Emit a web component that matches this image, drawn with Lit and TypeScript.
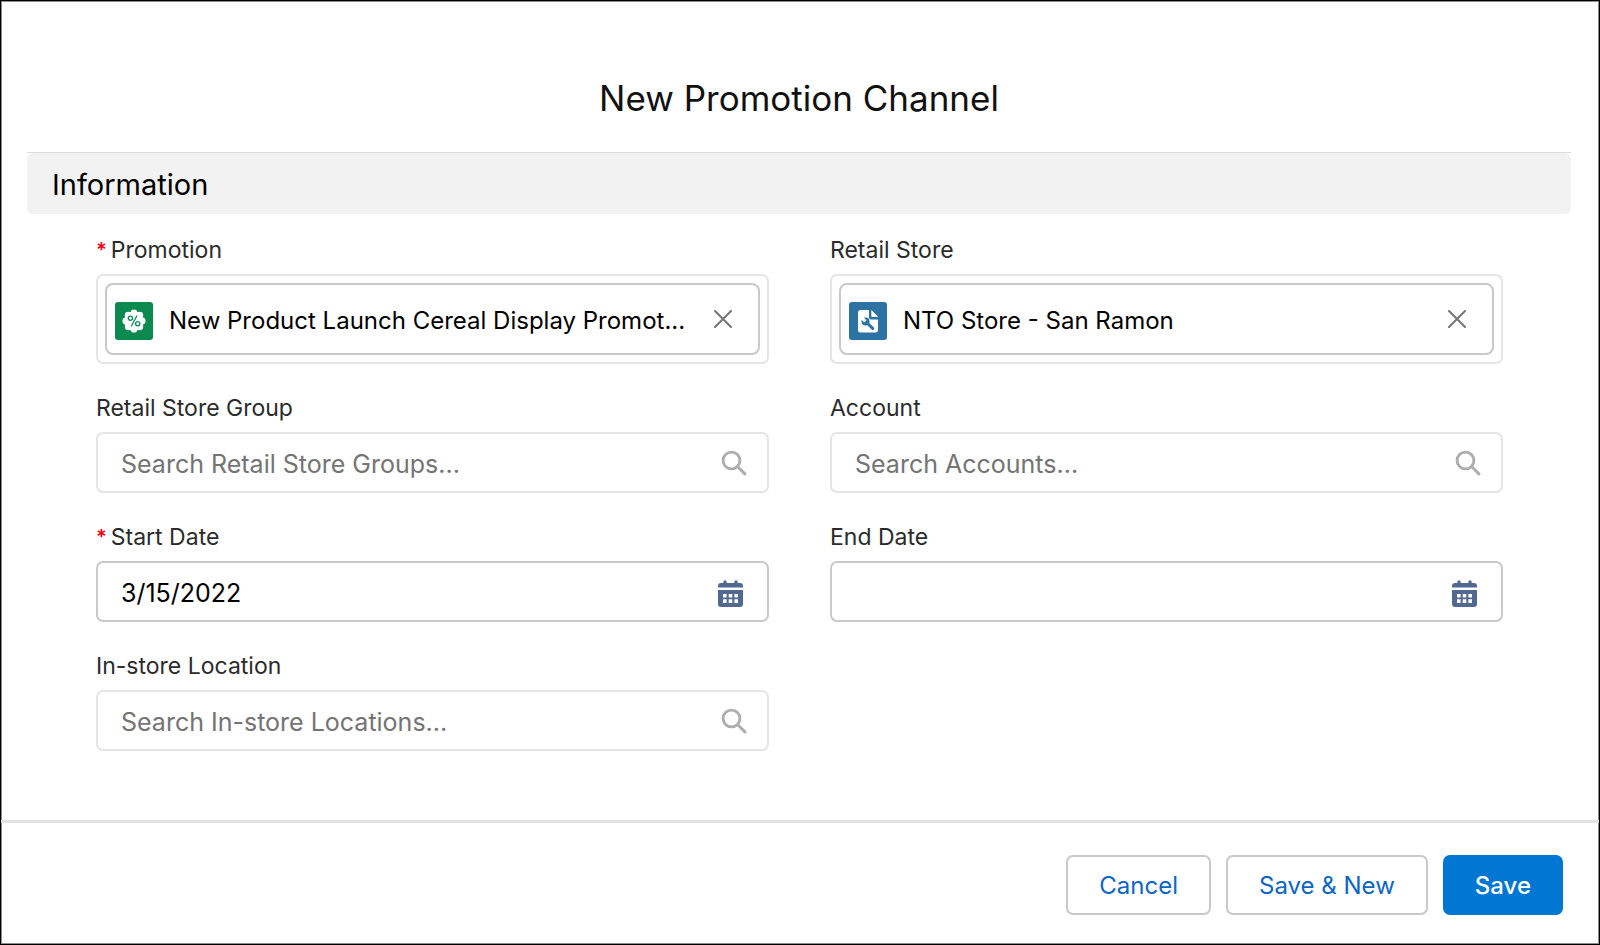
import { LitElement, html, css, svg } from "lit";
import { customElement } from "lit/decorators.js";

const closeIcon = html`<svg class="close-icon" viewBox="0 0 18 18" aria-hidden="true">
  <path d="M1 1 17 17M17 1 1 17" fill="none" stroke="#757575" stroke-width="2" stroke-linecap="round" />
</svg>`;

const searchIcon = html`<svg class="search-icon" viewBox="0 0 26 26" aria-hidden="true">
  <circle cx="10.5" cy="10.5" r="8.4" fill="none" stroke="#aeaeae" stroke-width="2.9" />
  <path d="M16.8 16.8 23.9 23.9" fill="none" stroke="#aeaeae" stroke-width="3" stroke-linecap="round" />
</svg>`;

const calendarIcon = html`<svg class="calendar-icon" viewBox="0 0 25 27" aria-hidden="true">
  <g fill="#52698f">
    <path d="M0 7.6V6a3 3 0 0 1 3-3h2.3V2a1.7 1.7 0 0 1 3.4 0v1h7.6V2a1.7 1.7 0 0 1 3.4 0v1H22a3 3 0 0 1 3 3v1.600z" />
    <path fill-rule="evenodd" d="M0 10h25v14a3 3 0 0 1-3 3H3a3 3 0 0 1-3-3zM5 14v3.600h3.600V14zm5.700 0v3.600h3.600V14zm5.700 0v3.600H20V14zM5 19.300v3.600h3.600v-3.600zm5.700 0v3.600h3.600v-3.600zm5.700 0v3.600H20v-3.600z" />
  </g>
</svg>`;

const badgePoints = Array.from({ length: 8 }, (_, i) => {
  const a = (i * Math.PI) / 4 - Math.PI / 2;
  return { x: 19 + 8.2 * Math.cos(a), y: 19 + 8.2 * Math.sin(a) };
});

const promotionIcon = html`<svg class="entity-icon" viewBox="0 0 38 38" aria-hidden="true">
  <rect width="38" height="38" rx="3" fill="#0b8a50" />
  <circle cx="19" cy="19" r="9.800" fill="#fff" />
  ${badgePoints.map((p) => svg`<circle cx=${p.x} cy=${p.y} r="3.400" fill="#fff" />`)}
  <g fill="none" stroke="#0b8a50" stroke-width="1.300" stroke-linecap="round">
    <circle cx="15.400" cy="16.300" r="2.100" />
    <circle cx="22.700" cy="21.700" r="2.100" />
    <path d="M21.800 14 16.400 24" />
  </g>
</svg>`;

const storeIcon = html`<svg class="entity-icon" viewBox="0 0 38 38" aria-hidden="true">
  <rect width="38" height="38" rx="3" fill="#2c73a3" />
  <path fill="#fff" d="M11.500 8H20v7.500a2 2 0 0 0 2 2h7V28a2.500 2.500 0 0 1-2.500 2.500h-15A2.500 2.500 0 0 1 9 28V10.500A2.500 2.500 0 0 1 11.500 8z" />
  <path fill="#fff" d="M22.700 8.300 28.700 14.200q.500.800-.500.800h-4.700a1.200 1.200 0 0 1-1.200-1.200V8.800q0-.800.400-.500z" />
  <circle cx="16.500" cy="19.500" r="4" fill="#2c73a3" />
  <path d="M17.500 20.500 23.700 26.400" stroke="#2c73a3" stroke-width="3" stroke-linecap="round" />
  <path d="M11.500 14.500 16.400 19.400" stroke="#fff" stroke-width="3" />
</svg>`;

@customElement("app-root")
export class AppRoot extends LitElement {
  static styles = css`
    :host {
      display: block;
      font-family: Inter, "Liberation Sans", sans-serif;
      color: #000;
    }
    * {
      box-sizing: border-box;
    }
    .dialog {
      display: flex;
      flex-direction: column;
      min-height: 100vh;
      border: 1px solid #000;
      background: #fff;
      box-shadow: inset 0 0 0 1px #8c8c8c;
    }
    .body {
      flex: 1;
      padding: 0 28px 32px 26px;
    }
    .title {
      margin: 0;
      padding: 73px 0 30px;
      font-size: 35px;
      line-height: 48px;
      font-weight: 400;
      text-align: center;
      color: #111;
    }
    .section {
      border-top: 1px solid #dcdcdc;
    }
    .section-title {
      margin: 0;
      padding: 12px 25px 9px;
      border-radius: 6px;
      background: #f2f2f2;
      font-size: 29px;
      line-height: 40px;
      font-weight: 400;
    }
    .fields {
      display: grid;
      grid-template-columns: repeat(2, minmax(0, 1fr));
      column-gap: 61px;
      row-gap: 26px;
      padding: 18px 68px 0 69px;
    }
    .label {
      display: flex;
      gap: 4px;
      margin-bottom: 6px;
      font-size: 23px;
      line-height: 36px;
      color: #2b2b2b;
    }
    .required {
      font-weight: 600;
      font-size: 20px;
      color: #f0000f;
    }
    .box {
      display: flex;
      align-items: center;
      height: 61px;
      border: 2px solid #e5e5e5;
      border-radius: 7px;
      padding-right: 20px;
    }
    .box.date {
      border-color: #c9c9c9;
      padding-right: 24px;
    }
    .input {
      flex: 1;
      min-width: 0;
      height: 100%;
      border: 0;
      padding: 2px 23px 0;
      outline: 0;
      background: none;
      font: inherit;
      font-size: 25px;
      color: #000;
    }
    .input::placeholder {
      color: #747474;
      opacity: 1;
    }
    .lookup {
      border: 2px solid #e5e5e5;
      border-radius: 7px;
      padding: 7px;
    }
    .pill {
      display: flex;
      align-items: center;
      height: 72px;
      border: 2px solid #c9c9c9;
      border-radius: 8px;
      padding: 4px 18px 0 8px;
    }
    .pill-text {
      flex: 1;
      min-width: 0;
      padding-left: 16px;
      overflow: hidden;
      text-overflow: ellipsis;
      white-space: nowrap;
      font-size: 24px;
      line-height: 36px;
    }
    .icon-button {
      display: flex;
      border: 0;
      padding: 4px 0 0;
      background: none;
      cursor: pointer;
    }
    .clear {
      padding: 6px 8px 10px;
    }
    .entity-icon {
      flex: none;
      width: 38px;
      height: 38px;
    }
    .close-icon {
      width: 18px;
      height: 18px;
    }
    .search-icon {
      flex: none;
      width: 26px;
      height: 26px;
    }
    .calendar-icon {
      width: 25px;
      height: 27px;
    }
    .footer {
      display: flex;
      justify-content: flex-end;
      gap: 15px;
      padding: 32px 36px 29px;
      border-top: 3px solid #e3e3e3;
    }
    .button {
      height: 60px;
      border: 2px solid #c9c9c9;
      border-radius: 7px;
      padding: 1px 31px 0;
      background: #fff;
      font: inherit;
      font-size: 24px;
      color: #0b66c6;
      cursor: pointer;
    }
    .button.brand {
      border-color: #0176d3;
      padding: 1px 30px 0;
      background: #0176d3;
      font-weight: 500;
      color: #fff;
    }
  `;

  private label(id: string, text: string, required = false) {
    return html`<label class="label" for=${id}>
      ${required ? html`<span class="required">*</span>` : null}<span>${text}</span>
    </label>`;
  }

  private pill(id: string, label: string, value: string, icon: unknown, required = false) {
    return html`<div class="field">
      ${this.label(id, label, required)}
      <div class="lookup">
        <div class="pill">
          ${icon}
          <span class="pill-text">${value}</span>
          <button class="icon-button clear" id=${id} type="button" title="Clear selection">${closeIcon}</button>
        </div>
      </div>
    </div>`;
  }

  private search(id: string, label: string, placeholder: string) {
    return html`<div class="field">
      ${this.label(id, label)}
      <div class="box">
        <input class="input" id=${id} type="text" placeholder=${placeholder} />
        ${searchIcon}
      </div>
    </div>`;
  }

  private date(id: string, label: string, value: string, required = false) {
    return html`<div class="field">
      ${this.label(id, label, required)}
      <div class="box date">
        <input class="input" id=${id} type="text" .value=${value} />
        <button class="icon-button" type="button" title="Select a date">${calendarIcon}</button>
      </div>
    </div>`;
  }

  render() {
    return html`<form class="dialog" @submit=${(e: Event) => e.preventDefault()}>
      <div class="body">
        <h1 class="title">New Promotion Channel</h1>
        <section class="section">
          <h2 class="section-title">Information</h2>
          <div class="fields">
            ${this.pill("promotion", "Promotion", "New Product Launch Cereal Display Promot...", promotionIcon, true)}
            ${this.pill("store", "Retail Store", "NTO Store - San Ramon", storeIcon)}
            ${this.search("group", "Retail Store Group", "Search Retail Store Groups...")}
            ${this.search("account", "Account", "Search Accounts...")}
            ${this.date("start", "Start Date", "3/15/2022", true)}
            ${this.date("end", "End Date", "")}
            ${this.search("location", "In-store Location", "Search In-store Locations...")}
          </div>
        </section>
      </div>
      <footer class="footer">
        <button class="button" type="button">Cancel</button>
        <button class="button" type="button">Save &amp; New</button>
        <button class="button brand" type="submit">Save</button>
      </footer>
    </form>`;
  }
}
